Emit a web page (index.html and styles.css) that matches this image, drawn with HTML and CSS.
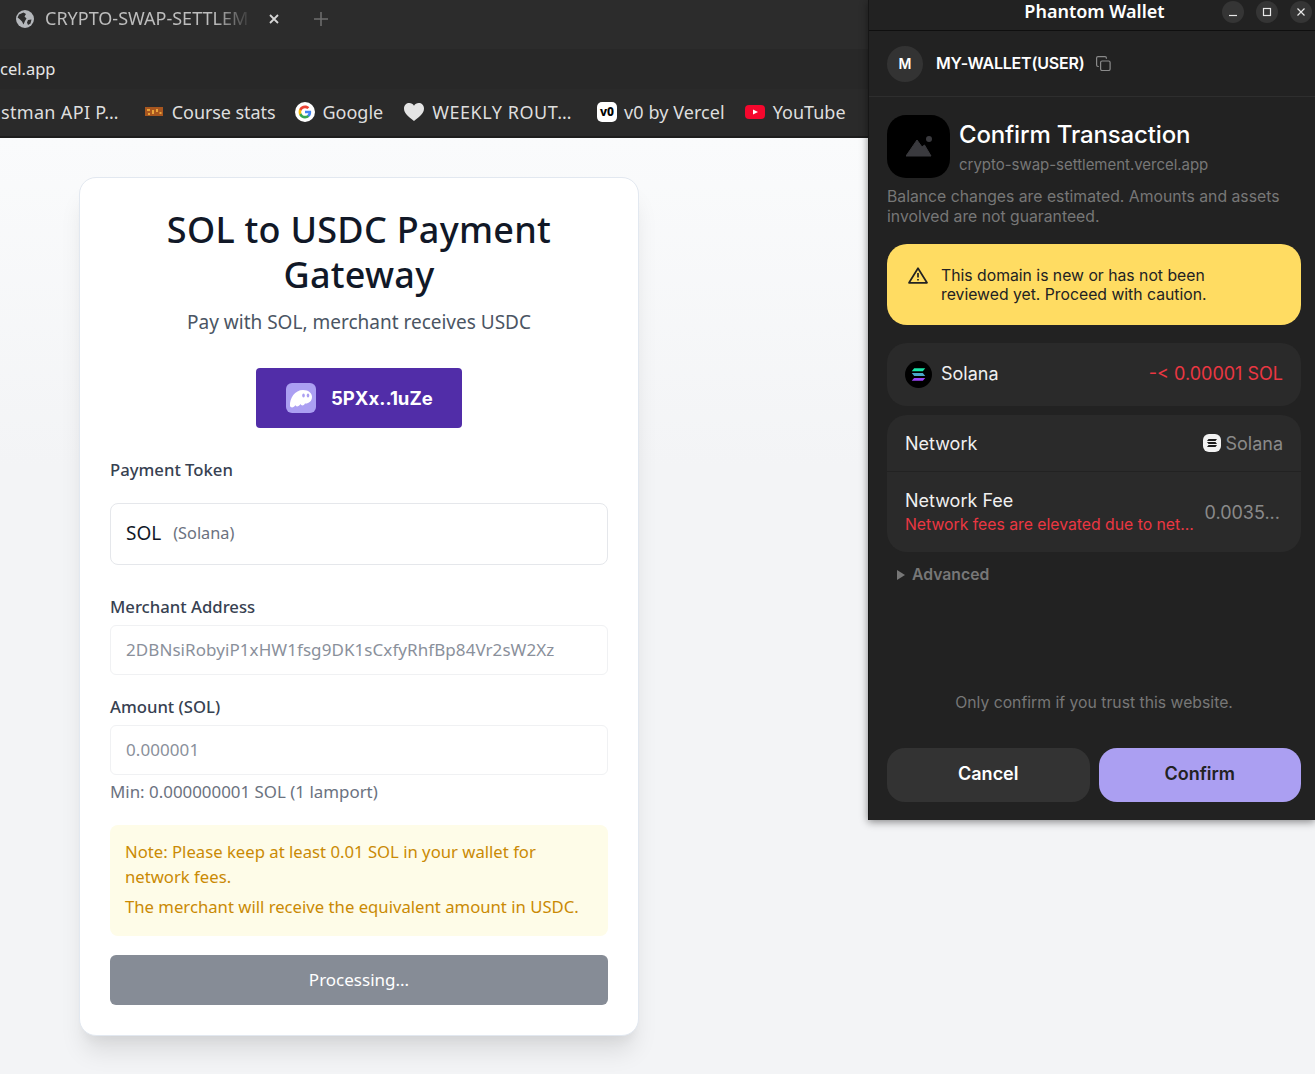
FILE: index.html
```html
<!DOCTYPE html>
<html>

<head>
    <title>SOL to USDC Payment Gateway</title>
    <link rel="stylesheet" href="styles.css">
</head>

<body>
    <div class="browser">
        <div class="tabstrip">
            <svg class="tab-globe" viewBox="0 0 18 18">
                <circle cx="9" cy="9" r="9" fill="#b4b7bb" />
                <path d="M3 4.5 L7.5 2.5 L10 4 L8.5 6.5 L10.5 8.5 L9 11 L7.5 14.5 L6 11.5 L3.5 9 L1.6 7.5Z M12 10 L15.5 9.5 L14.5 13.5 L12 15 L11 12.5Z" fill="#2c2c2c" />
            </svg>
            <span class="tab-title">CRYPTO-SWAP-SETTLEM</span>
            <svg class="tab-close" viewBox="0 0 10 10">
                <path d="M1 1 L9 9 M9 1 L1 9" stroke="#d6d6d6" stroke-width="1.8" fill="none" />
            </svg>
            <svg class="tab-new" viewBox="0 0 14 14">
                <path d="M7 0 V14 M0 7 H14" stroke="#6d6d6d" stroke-width="1.6" fill="none" />
            </svg>
        </div>
        <div class="toolbar">
            <span class="url">cel.app</span>
            <svg class="share" viewBox="0 0 18 18">
                <g fill="none" stroke="#b8b8b8" stroke-width="1.3">
                    <circle cx="3.5" cy="9" r="2.3" />
                    <circle cx="14.5" cy="3.2" r="2.3" />
                    <circle cx="14.5" cy="14.8" r="2.3" />
                    <path d="M5.5 7.9 L12.5 4.3 M5.5 10.1 L12.5 13.7" />
                </g>
            </svg>
            <span class="tool-sep"></span>
            <svg class="brave" viewBox="0 0 20 23">
                <path d="M4 0 H16 L19 4 L20 8 L17 17 L10 23 L3 17 L0 8 L1 4Z" fill="#e8501f" />
                <path d="M6 6 H14 L15 9 L12 13 L10 17 L8 13 L5 9Z" fill="#f6e9e2" />
            </svg>
        </div>
        <div class="bookmarks">
            <span class="bm bm-first">stman API P…</span>
            <span class="bm bm-course">
                <svg class="bm-icon" viewBox="0 0 18 9">
                    <rect width="18" height="9" fill="#a8561f" />
                    <path d="M2 2 H5 V4 H2Z M7 3 H9 V7 H7Z M11 2 H13 V5 H11Z M14.500 5 H16.500 V7 H14.500Z M3 6 H5 V8 H3Z" fill="#e8a33a" />
                </svg>
                Course stats
            </span>
            <span class="bm bm-google">
                <svg class="bm-icon-lg" viewBox="0 0 24 24">
                    <circle cx="12" cy="12" r="12" fill="#fff" />
                    <g transform="translate(3.600 3.600) scale(0.7)">
                        <path d="M22.56 12.25c0-.78-.07-1.53-.2-2.25H12v4.26h5.92c-.26 1.37-1.04 2.53-2.21 3.31v2.77h3.57c2.08-1.92 3.28-4.74 3.28-8.09z" fill="#4285F4" />
                        <path d="M12 23c2.97 0 5.46-.98 7.28-2.66l-3.57-2.77c-.98.66-2.23 1.06-3.71 1.06-2.86 0-5.29-1.93-6.16-4.53H2.18v2.84C3.99 20.53 7.7 23 12 23z" fill="#34A853" />
                        <path d="M5.84 14.09c-.22-.66-.35-1.36-.35-2.09s.13-1.43.35-2.09V7.07H2.18C1.43 8.55 1 10.22 1 12s.43 3.45 1.18 4.93l2.85-2.22.81-.62z" fill="#FBBC05" />
                        <path d="M12 5.38c1.62 0 3.06.56 4.21 1.64l3.15-3.15C17.45 2.09 14.97 1 12 1 7.7 1 3.99 3.47 2.18 7.07l3.66 2.84c.87-2.6 3.3-4.53 6.16-4.53z" fill="#EA4335" />
                    </g>
                </svg>
                Google
            </span>
            <span class="bm bm-weekly">
                <svg class="bm-icon-lg" viewBox="0 0 20 20">
                    <path d="M10 19 C4 14.500 0 11 0 6.500 C0 3 2.500 1 5.300 1 C7.300 1 9 2 10 3.800 C11 2 12.700 1 14.700 1 C17.500 1 20 3 20 6.500 C20 11 16 14.500 10 19Z" fill="#e4e4e4" />
                </svg>
                <span class="bm-wide">WEEKLY ROUT…</span>
            </span>
            <span class="bm bm-v0">
                <span class="v0-tile">v0</span>
                v0 by Vercel
            </span>
            <span class="bm">
                <svg class="bm-icon-lg" viewBox="0 0 20 20">
                    <rect y="3" width="20" height="14" rx="4" fill="#f5072d" />
                    <path d="M8 7.500 L13 10 L8 12.500Z" fill="#fff" />
                </svg>
                YouTube
            </span>
        </div>
    </div>

    <main class="page">
        <section class="card">
            <h1 class="card-title">SOL to USDC Payment Gateway</h1>
            <p class="card-sub">Pay with SOL, merchant receives USDC</p>
            <div class="connect-row">
                <button class="connect">
                    <span class="ghost-tile">
                        <svg viewBox="0 0 30 30" class="ghost">
                            <path d="M4 23 C3.500 15 9 7 17 7 C23 7 26 10.500 26 14 C26 18.500 22 21 19 20.500 C18 23 15 23 14.500 21 C13 24 9.500 24 9.500 22 C8 25 4.500 25 4 23Z" fill="#fff" />
                            <ellipse cx="17.500" cy="12.500" rx="1.300" ry="2" fill="#ab9ff2" />
                            <ellipse cx="22" cy="12.500" rx="1.300" ry="2" fill="#ab9ff2" />
                        </svg>
                    </span>
                    5PXx..1uZe
                </button>
            </div>

            <label class="field-label label-token">Payment Token</label>
            <div class="token-select"><span class="token-name">SOL</span><span class="token-net">(Solana)</span></div>

            <label class="field-label label-merchant">Merchant Address</label>
            <div class="text-field">2DBNsiRobyiP1xHW1fsg9DK1sCxfyRhfBp84Vr2sW2Xz</div>

            <label class="field-label label-amount">Amount (SOL)</label>
            <div class="text-field">0.000001</div>
            <p class="hint">Min: 0.000000001 SOL (1 lamport)</p>

            <div class="note">
                <p>Note: Please keep at least 0.01 SOL in your wallet for network fees.</p>
                <p class="note-second">The merchant will receive the equivalent amount in USDC.</p>
            </div>

            <button class="submit">Processing...</button>
        </section>
    </main>

    <aside class="wallet">
        <div class="titlebar">
            <span class="titlebar-name">Phantom Wallet</span>
            <span class="win-btns">
                <span class="win-btn"><svg viewBox="0 0 10 10"><path d="M1 8.500 H9" stroke="#e8e8e8" stroke-width="1.200" /></svg></span>
                <span class="win-btn"><svg viewBox="0 0 10 10"><rect x="1.500" y="1.500" width="7" height="7" fill="none" stroke="#e8e8e8" stroke-width="1.200" /></svg></span>
                <span class="win-btn"><svg viewBox="0 0 10 10"><path d="M1.500 1.500 L8.500 8.500 M8.500 1.500 L1.500 8.500" stroke="#e8e8e8" stroke-width="1.200" /></svg></span>
            </span>
        </div>
        <div class="account">
            <span class="avatar">M</span>
            <span class="account-name">MY-WALLET(USER)</span>
            <svg class="copy" viewBox="0 0 15 15">
                <g fill="none" stroke="#8a8a8a" stroke-width="1.200">
                    <rect x="4.600" y="5" width="9.500" height="9.500" rx="1.500" />
                    <path d="M2.800 10.500 H2 C1.200 10.500 .6 9.900 .6 9.100 V2 C.6 1.200 1.200 .6 2 .6 H9 C9.800 .6 10.400 1.200 10.400 2 V2.800" />
                </g>
            </svg>
        </div>
        <div class="wallet-body">
            <div class="app-head">
                <span class="app-icon">
                    <svg viewBox="0 0 26 22" class="app-glyph">
                        <path d="M0 20 L11 4 L16 11 L18.500 9 L25 20Z" fill="#3a3a3e" stroke="#3a3a3e" stroke-linejoin="round" />
                        <circle cx="23" cy="3" r="3" fill="#3a3a3e" />
                    </svg>
                </span>
                <div>
                    <h2 class="app-title">Confirm Transaction</h2>
                    <div class="app-domain">crypto-swap-settlement.vercel.app</div>
                </div>
            </div>
            <p class="estimate">Balance changes are estimated. Amounts and assets involved are not guaranteed.</p>

            <div class="warning">
                <svg class="warning-icon" viewBox="0 0 20 17">
                    <path d="M10 1.200 L19 15.800 H1Z" fill="none" stroke="#222" stroke-width="1.700" stroke-linejoin="round" />
                    <path d="M10 6 V10.500 M10 12 V13.600" stroke="#222" stroke-width="1.700" fill="none" />
                </svg>
                <span>This domain is new or has not been reviewed yet. Proceed with caution.</span>
            </div>

            <div class="panel row-asset">
                <span class="asset">
                    <svg class="sol-logo" viewBox="0 0 28 28">
                        <circle cx="14" cy="14" r="14" fill="#000" />
                        <path d="M9.500 7.500 H21 L18.500 10.500 H7Z" fill="#19e6a8" />
                        <path d="M7 12.500 H18.500 L21 15.500 H9.500Z" fill="#4aa6c8" />
                        <path d="M9.500 17.500 H21 L18.500 20.500 H7Z" fill="#9a45f5" />
                    </svg>
                    Solana
                </span>
                <span class="delta">-&lt; 0.00001 SOL</span>
            </div>

            <div class="panel">
                <div class="row row-network">
                    <span>Network</span>
                    <span class="net-value">
                        <span class="net-tile">
                            <svg viewBox="0 0 10 8" class="net-glyph">
                                <path d="M1.500 0 H10 L8.500 2 H0Z M0 3 H8.500 L10 5 H1.500Z M1.500 6 H10 L8.500 8 H0Z" fill="#1b1b1b" />
                            </svg>
                        </span>
                        Solana
                    </span>
                </div>
                <div class="row row-fee">
                    <div>
                        <div>Network Fee</div>
                        <div class="fee-warn">Network fees are elevated due to net...</div>
                    </div>
                    <span class="fee-value">0.0035...</span>
                </div>
            </div>

            <div class="advanced"><span class="caret"></span>Advanced</div>
            <p class="trust">Only confirm if you trust this website.</p>
            <div class="actions">
                <button class="btn btn-cancel">Cancel</button>
                <button class="btn btn-confirm">Confirm</button>
            </div>
        </div>
    </aside>
</body>

</html>
```
FILE: styles.css
```css
* {
    box-sizing: border-box;
}
body {
    margin: 0;
    height: 1074px;
    overflow: hidden;
    background-color: #f3f4f6;
    font-family: "Noto Sans", sans-serif;
}

/* browser chrome */
.browser {
    height: 138px;
    color: #e2e2e2;
}
.tabstrip {
    height: 49px;
    background-color: #2c2c2c;
    display: flex;
    align-items: center;
    padding: 0 0 12px 16px;
}
.tab-globe {
    width: 18px;
    height: 18px;
    margin-right: 11px;
}
.tab-title {
    width: 207px;
    overflow: hidden;
    white-space: nowrap;
    font-size: 18px;
    margin-top: -1px;
    color: #bdbdbd;
    -webkit-mask-image: linear-gradient(to right, #000 82%, transparent 100%);
    mask-image: linear-gradient(to right, #000 82%, transparent 100%);
}
.tab-close {
    width: 10px;
    height: 10px;
    margin-left: 17px;
}
.tab-new {
    width: 14px;
    height: 14px;
    margin-left: 35px;
}
.toolbar {
    height: 40px;
    background-color: #282828;
    display: flex;
    align-items: center;
}
.url {
    font-size: 16.500px;
    color: #e6e6e6;
    margin-right: auto;
    margin-top: -2px;
}
.share {
    width: 18px;
    height: 18px;
    margin-top: 1px;
}
.tool-sep {
    width: 1px;
    height: 20px;
    margin-left: 11px;
    background-color: #6a6a6a;
}
.brave {
    width: 20px;
    height: 23px;
    margin-left: 14px;
    flex-shrink: 0;
    margin-right: -10px;
}
.bookmarks {
    height: 49px;
    padding-bottom: 2px;
    background-color: #2a2a2a;
    border-bottom: 2px solid #1d1d1d;
    display: flex;
    align-items: center;
    font-size: 18px;
    color: #dedede;
    white-space: nowrap;
    gap: 20px;
}
.bm {
    display: flex;
    align-items: center;
    gap: 8px;
}
.bm-first {
    margin-left: 1px;
    letter-spacing: 0.33px;
}
.bm-course {
    margin-left: 6px;
    letter-spacing: -0.08px;
}
.bm-google {
    gap: 7px;
}
.bm-icon {
    width: 18px;
    height: 9px;
    margin-right: 1px;
}
.bm-icon-lg {
    width: 20px;
    height: 20px;
}
.bm-wide {
    letter-spacing: 0.55px;
}
.bm-weekly {
    margin-left: 1px;
}
.bm-v0 {
    margin-left: 5px;
    gap: 7px;
    letter-spacing: 0.08px;
}
.v0-tile {
    width: 20px;
    height: 20px;
    border-radius: 5px;
    background-color: #fff;
    color: #000;
    font-size: 12px;
    font-weight: 800;
    line-height: 19px;
    text-align: center;
}

/* payment form */
.page {
    height: 936px;
    padding: 39px 0 0 79px;
    background: linear-gradient(#fafbfc, #f3f4f6 35%);
}
.card {
    width: 560px;
    height: 859px;
    padding: 29px 30px 30px;
    background-color: #fff;
    border: 1px solid #e2e8f0;
    border-radius: 17px;
    box-shadow: 0 20px 25px -5px rgba(0, 0, 0, 0.1), 0 10px 10px -5px rgba(0, 0, 0, 0.04);
}
.card-title {
    margin: 0;
    font-size: 36px;
    line-height: 45px;
    font-weight: 500;
    letter-spacing: 0.26px;
    text-align: center;
    color: #111827;
}
.card-sub {
    margin: 11px 0 0;
    font-size: 19px;
    line-height: 28px;
    text-align: center;
    color: #4b5563;
}
.connect-row {
    display: flex;
    justify-content: center;
    margin-top: 32px;
}
.connect {
    width: 206px;
    height: 60px;
    border: none;
    border-radius: 4px;
    background-color: #512da8;
    color: #fff;
    font-family: Inter, sans-serif;
    font-size: 18.500px;
    font-weight: 700;
    display: flex;
    align-items: center;
    padding: 0 0 0 30px;
    gap: 15px;
}
.ghost-tile {
    width: 30px;
    height: 30px;
    border-radius: 6px;
    background-color: #ab9ff2;
    display: block;
}
.ghost {
    display: block;
    width: 30px;
    height: 30px;
}
.field-label {
    display: block;
    font-size: 16.700px;
    line-height: 24px;
    font-weight: 500;
    color: #374151;
}
.label-token {
    margin-top: 30px;
}
.label-merchant {
    margin-top: 30px;
}
.label-amount {
    margin-top: 20px;
}
.token-select {
    height: 62px;
    margin-top: 21px;
    padding: 0 15px 2px;
    border: 1px solid #e5e7eb;
    border-radius: 8px;
    display: flex;
    align-items: center;
    gap: 12px;
}
.token-name {
    font-size: 19px;
    color: #111827;
}
.token-net {
    font-size: 16.300px;
    color: #6b7280;
}
.text-field {
    height: 50px;
    margin-top: 6px;
    padding: 0 15px;
    border: 1px solid #f0f1f3;
    border-radius: 6px;
    font-size: 17px;
    line-height: 48px;
    letter-spacing: 0.07px;
    color: #8a909b;
    white-space: nowrap;
}
.hint {
    margin: 5px 0 0;
    font-size: 16.900px;
    line-height: 24px;
    color: #6b7280;
}
.note {
    height: 111px;
    margin-top: 21px;
    padding: 14px 15px;
    background-color: #fefce8;
    border-radius: 8px;
    font-size: 16.700px;
    line-height: 25px;
    color: #ca8a04;
}
.note p {
    margin: 0;
}
.note .note-second {
    margin-top: 5px;
}
.submit {
    display: block;
    width: 100%;
    height: 50px;
    margin-top: 19px;
    padding-bottom: 3px;
    border: none;
    border-radius: 6px;
    background-color: #868c96;
    color: #fff;
    font-family: "Noto Sans", sans-serif;
    font-size: 17px;
}

/* wallet popup window */
.wallet {
    position: absolute;
    left: 868px;
    top: 0;
    width: 447px;
    height: 820px;
    background-color: #222;
    border-left: 1px solid #161616;
    box-shadow: 0 2px 8px rgba(0, 0, 0, 0.45);
    color: #fff;
    font-family: Inter, sans-serif;
    display: flex;
    flex-direction: column;
}
.titlebar {
    height: 31px;
    flex-shrink: 0;
    border-bottom: 1px solid #0f0f0f;
    position: relative;
    text-align: center;
    font-family: "Noto Sans", sans-serif;
    font-size: 18px;
    font-weight: 600;
    line-height: 23px;
    padding-left: 5px;
}
.win-btns {
    position: absolute;
    right: 3px;
    top: 1px;
    display: flex;
    gap: 12px;
}
.win-btn {
    width: 22px;
    height: 22px;
    border-radius: 50%;
    background-color: #353535;
    display: flex;
    align-items: center;
    justify-content: center;
}
.win-btn svg {
    width: 10px;
    height: 10px;
}
.account {
    height: 66px;
    flex-shrink: 0;
    border-bottom: 1px solid #2e2e2e;
    display: flex;
    align-items: center;
    padding: 0 18px;
}
.avatar {
    width: 36px;
    height: 36px;
    border-radius: 50%;
    background-color: #333;
    font-size: 14px;
    font-weight: 600;
    line-height: 36px;
    text-align: center;
    margin-right: 13px;
}
.account-name {
    font-size: 16px;
    font-weight: 600;
    letter-spacing: -0.2px;
    margin-top: -1px;
}
.copy {
    width: 15px;
    height: 15px;
    margin-left: 12px;
}
.wallet-body {
    flex: 1;
    padding: 18px 14px 18px 18px;
    display: flex;
    flex-direction: column;
}
.app-head {
    display: flex;
    gap: 9px;
}
.app-icon {
    width: 63px;
    height: 63px;
    border-radius: 19px;
    background-color: #000;
    display: flex;
    align-items: center;
    justify-content: center;
    flex-shrink: 0;
}
.app-glyph {
    width: 26px;
    height: 22px;
}
.app-title {
    margin: 4px 0 0;
    font-size: 24px;
    line-height: 32px;
    font-weight: 500;
    letter-spacing: -0.15px;
}
.app-domain {
    margin-top: 4px;
    font-size: 15px;
    line-height: 20px;
    letter-spacing: -0.03px;
    color: #777;
}
.estimate {
    margin: 9px 0 0;
    font-size: 15.750px;
    line-height: 20px;
    color: #777;
}
.warning {
    height: 81px;
    margin-top: 17px;
    padding: 0 40px 0 21px;
    background-color: #ffdc62;
    border-radius: 20px;
    color: #222;
    font-size: 15.750px;
    line-height: 19px;
    display: flex;
    align-items: center;
    gap: 13px;
}
.warning-icon {
    width: 20px;
    height: 17px;
    flex-shrink: 0;
    margin-top: -19px;
}
.panel {
    background-color: #2a2a2a;
    border-radius: 20px;
    font-size: 18px;
    color: #f0f0f0;
    margin-top: 9px;
}
.row-asset {
    height: 63px;
    margin-top: 18px;
    padding: 0 18px 2px;
    display: flex;
    align-items: center;
    justify-content: space-between;
}
.asset {
    display: flex;
    align-items: center;
    gap: 9px;
}
.sol-logo {
    width: 27px;
    height: 27px;
    margin-top: 2px;
}
.delta {
    color: #eb3742;
}
.row {
    display: flex;
    align-items: center;
    justify-content: space-between;
    padding: 0 18px;
}
.row-network {
    height: 57px;
    border-bottom: 1px solid #222;
}
.net-value {
    display: flex;
    align-items: center;
    gap: 4px;
    color: #8a8a8a;
}
.net-tile {
    width: 18px;
    height: 18px;
    border-radius: 6px;
    background-color: #f2f2f2;
    display: flex;
    align-items: center;
    justify-content: center;
}
.net-glyph {
    width: 10px;
    height: 8px;
}
.row-fee {
    height: 80px;
    padding-right: 21px;
}
.fee-warn {
    margin-top: 4px;
    font-size: 15.750px;
    color: #eb3742;
    line-height: 20px;
}
.fee-value {
    color: #8a8a8a;
}
.advanced {
    margin-top: 13px;
    padding-left: 10px;
    font-size: 15.750px;
    line-height: 20px;
    font-weight: 600;
    color: #777;
    display: flex;
    align-items: center;
    gap: 7px;
}
.caret {
    width: 0;
    height: 0;
    border-left: 8px solid #777;
    border-top: 5px solid transparent;
    border-bottom: 5px solid transparent;
}
.trust {
    margin: auto 0 0;
    font-size: 15.750px;
    line-height: 20px;
    text-align: center;
    color: #777;
}
.actions {
    display: flex;
    gap: 9px;
    margin-top: 35px;
}
.btn {
    flex: 1;
    height: 54px;
    padding-bottom: 5px;
    border: none;
    border-radius: 18px;
    font-family: Inter, sans-serif;
    font-size: 18px;
    font-weight: 600;
}
.btn-cancel {
    background-color: #333;
    color: #fff;
}
.btn-confirm {
    background-color: #ab9ff2;
    color: #222;
}
```
